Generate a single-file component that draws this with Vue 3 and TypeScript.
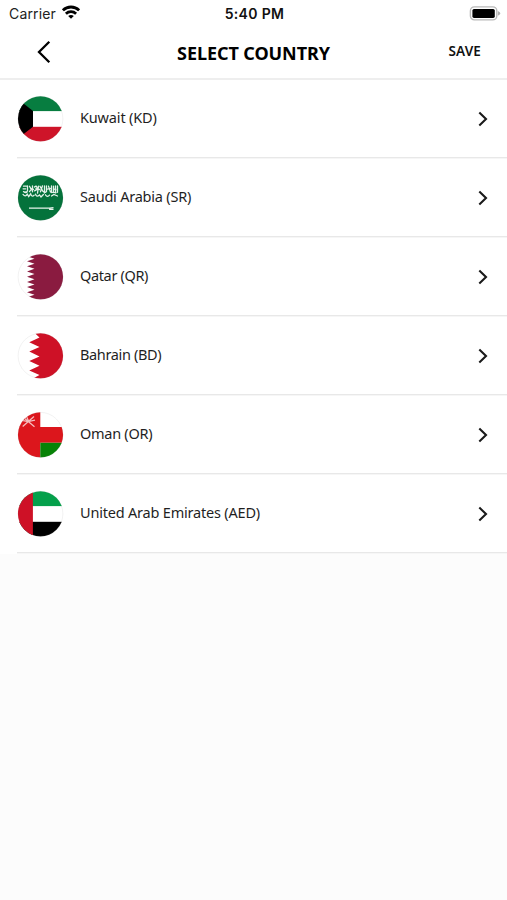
<script setup lang="ts">
interface Country {
  id: string
  label: string
}

const countries: Country[] = [
  { id: 'kw', label: 'Kuwait (KD)' },
  { id: 'sa', label: 'Saudi Arabia (SR)' },
  { id: 'qa', label: 'Qatar (QR)' },
  { id: 'bh', label: 'Bahrain (BD)' },
  { id: 'om', label: 'Oman (OR)' },
  { id: 'ae', label: 'United Arab Emirates (AED)' },
]
</script>

<template>
  <div class="screen">
    <header class="top">
      <div class="status">
        <div class="carrier">
          <span>Carrier</span>
          <svg class="wifi" width="18" height="14" viewBox="0 0 18 14" fill="none" stroke="#000" stroke-width="2.8">
            <path d="M0.9 5.3C5.4 0.9 12.6 0.9 17.1 5.3" />
            <path d="M3.9 8.7C6.8 6 11.2 6 14.1 8.7" />
            <path d="M6.2 11C7.8 9.6 10.2 9.6 11.8 11L9 13.8Z" fill="#000" stroke="none" />
          </svg>
        </div>
        <div class="time">5:40 PM</div>
        <svg class="battery" width="32" height="15" viewBox="0 0 32 15">
          <rect x="1.4" y="0.9" width="26.4" height="13" rx="4" fill="#fff" stroke="#b9b9b9" stroke-width="1.4" />
          <rect x="3.4" y="2.9" width="22.4" height="9" rx="1.6" fill="#000" />
          <path d="M28.9 5Q31.4 6.4 31.4 7.4Q31.4 8.4 28.9 9.8Z" fill="#b0b0b0" />
        </svg>
      </div>
      <nav class="bar">
        <svg class="back" width="16" height="24" viewBox="0 0 16 24" fill="none" stroke="#000" stroke-width="2.3">
          <path d="M13.3 1.8L3 12L13.3 22.2" />
        </svg>
        <h1>SELECT COUNTRY</h1>
        <button type="button">SAVE</button>
      </nav>
    </header>

    <ul class="list">
      <li v-for="c in countries" :key="c.id" class="row">
        <svg class="flag" width="47" height="47" viewBox="-0.5 -0.8 47 47">
          <defs>
            <clipPath :id="'clip-' + c.id"><circle cx="23" cy="23" r="22.6" /></clipPath>
          </defs>
          <g :clip-path="`url(#clip-${c.id})`">
            <rect width="46" height="46" fill="#fff" />
            <template v-if="c.id === 'kw'">
              <rect width="46" height="15.3" fill="#077d40" />
              <rect y="31" width="46" height="15" fill="#ce1429" />
              <path d="M0 3L15.5 15.3V31L0 43Z" fill="#000" />
            </template>
            <template v-else-if="c.id === 'sa'">
              <rect width="46" height="46" fill="#04723b" />
              <g fill="none" stroke="#e3f0e8" stroke-width="1.3" stroke-linecap="round">
                <path d="M6 11.4h3M10 11v5q-2 3-4 .8M5.6 14h2.6M12 11.5l2 3.2-2 2M15 11v6M17 12.2q2-1.8 2.5.6T17 16M21 11.3l-1 7M22.5 11.5l3 5M25 11l-2 6M27 11.2v7M29 11v5.5q-1.5 2-2.8.5M31 11.3l2 6M34 11v6.8M36 11.3v5.5M38 11v7M40 11.2v6.3" />
                <path d="M5.5 19.6q2.4 3 4.3-.2l1.4 2.4 2-2.8q1 3.7 3.4 1.5M18 19.3q1 3.6 4 .8l1.5 2 2.4-2.4M28 20q2 2.8 4 .3M34 21.2l2.4-1.6 3.6 1.6M7.3 17l2 .7M13 13.8l3 .8M18.2 14l4 .7M30 14.3l3-.8M36.5 14.2l2 .8M35 17.6l3.5.3" />
              </g>
              <path d="M11.5 33.4H32L36 32.9M31.6 34.6H36" fill="none" stroke="#e8f3ec" stroke-width="1.3" />
            </template>
            <template v-else-if="c.id === 'qa'">
              <path d="M46 0H17L9.5 2.5L17 5L9.5 7.5L17 10L9.5 12.5L17 15L9.5 17.6L17 20.2L9.5 22.9L17 25.5L9.5 28.1L17 30.7L9.5 33.3L17 35.9L9.5 38.4L17 41L9.5 43.5L17 46H46Z" fill="#8a1b40" />
            </template>
            <template v-else-if="c.id === 'bh'">
              <path d="M46 0H17L22 4.8L11.8 9.4L22 14.2L11.8 18.8L22 23.6L11.8 28.2L22 33L11.8 37.6L22 42.2L15 46H46Z" fill="#ce1126" />
            </template>
            <template v-else-if="c.id === 'om'">
              <path d="M0 0H22.8V15.3H46V31H22.8V46H0Z" fill="#dc161c" />
              <rect x="22.8" y="31" width="23.2" height="15" fill="#078307" />
              <g fill="none" stroke="#f4bcbc" stroke-width="1.3">
                <path d="M5.2 14.8L16.5 4.8M6 5.7L17 15M8.8 4.5L11.2 9.5M4.6 8.5L10.5 9.8L17.5 8.4" />
              </g>
            </template>
            <template v-else>
              <rect width="46" height="15.3" fill="#04a04b" />
              <rect y="31" width="46" height="15" fill="#000" />
              <rect width="15.4" height="46" fill="#ce1126" />
            </template>
          </g>
          <circle cx="23" cy="23" r="22.4" fill="none" stroke="#888" stroke-opacity="0.14" stroke-width="0.8" />
        </svg>
        <span class="label" :class="c.id">{{ c.label }}</span>
        <svg class="chevron" width="12" height="16" viewBox="0 0 12 16" fill="none" stroke="#1a1a1a" stroke-width="2.1">
          <path d="M2.3 1.6L9 8L2.3 14.4" />
        </svg>
      </li>
    </ul>
  </div>
</template>

<style>
body {
  background: #fcfcfc;
}
</style>

<style scoped>
.screen {
  min-height: 900px;
  background: #fcfcfc;
  font-family: 'Noto Sans', 'Open Sans', sans-serif;
  color: #1f1f1f;
}
.top {
  box-sizing: border-box;
  height: 80px;
  background: #fff;
  border-bottom: 2px solid #eeeeee;
}
.status {
  height: 26px;
  display: grid;
  grid-template-columns: 1fr auto 1fr;
  align-items: center;
  padding: 0 6px 0 9px;
  font-family: Inter, sans-serif;
}
.carrier {
  display: flex;
  align-items: center;
  gap: 6px;
  font-size: 14px;
  letter-spacing: 0.15px;
  color: #222;
}
.wifi {
  margin-top: -2px;
}
.time {
  margin: 1px 1px 0 0;
  font-size: 14px;
  font-weight: 600;
  letter-spacing: 0.35px;
  color: #111;
}
.battery {
  justify-self: end;
}
.bar {
  height: 52px;
  display: grid;
  grid-template-columns: 1fr auto 1fr;
  align-items: center;
  padding: 0 26px 0 26px;
}
.back {
  margin-left: 10px;
}
h1 {
  margin: 2px 0 0;
  font-size: 18px;
  line-height: 24px;
  font-weight: 700;
  letter-spacing: -0.08px;
  color: #000;
}
button {
  justify-self: end;
  margin-top: -2px;
  padding: 0;
  border: 0;
  background: none;
  font: 600 13.5px/18px 'Noto Sans', sans-serif;
  letter-spacing: 0.1px;
  color: #111;
}
.list {
  list-style: none;
  margin: 0;
  padding: 0;
  background: #fff;
}
.row {
  box-sizing: border-box;
  height: 79px;
  display: flex;
  align-items: center;
  padding: 0 18px 2px 17px;
  background: linear-gradient(#e8e8e8, #e8e8e8) 17px 77px / 490px 1px no-repeat,
    linear-gradient(#f6f6f6, #f6f6f6) 17px 78px / 490px 1px no-repeat;
}
.label {
  flex: 1;
  margin: -4px 0 0 16px;
  font-size: 14.5px;
  line-height: 20px;
  letter-spacing: -0.2px;
}
.kw {
  letter-spacing: -0.16px;
}
.sa {
  letter-spacing: -0.22px;
}
.qa,
.bh {
  letter-spacing: -0.36px;
}
.om {
  letter-spacing: -0.28px;
}
</style>
